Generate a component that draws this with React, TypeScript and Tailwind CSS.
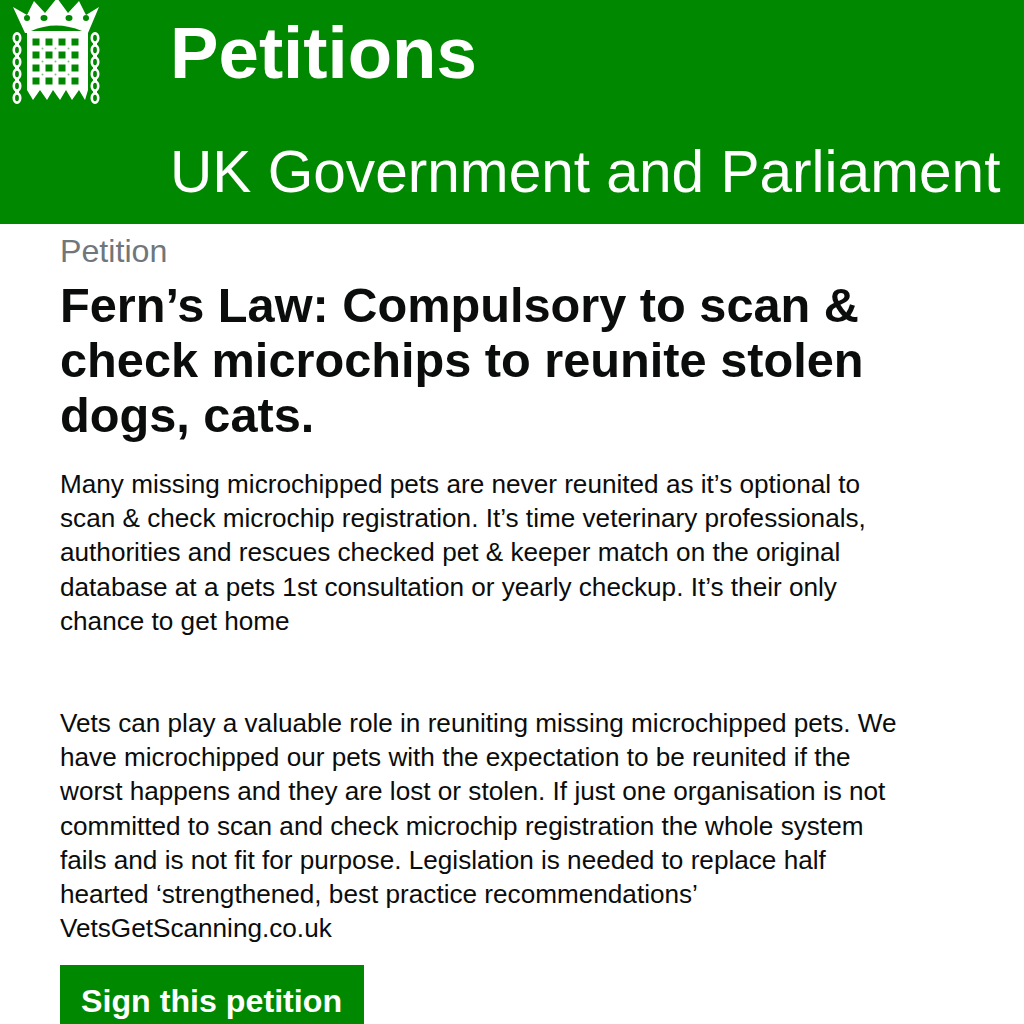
import React from "react";

function Logo() {
  const G = "#008800";
  const squares: React.ReactElement[] = [];
  const dots: React.ReactElement[] = [];
  const xs = [36, 49, 62, 75];
  const ys = [42, 55, 68, 81];
  ys.forEach((y, r) =>
    xs.forEach((x, c) => {
      squares.push(<rect key={`s${r}-${c}`} x={x - 3.5} y={y - 3.5} width={7} height={7} fill={G} />);
      if (c < 3 && r < 3) dots.push(<circle key={`d${r}-${c}`} cx={x + 6.5} cy={y + 6.5} r={1} fill="#7fc27f" />);
    })
  );
  const chain = (x: number) =>
    [38, 50, 62, 74, 86, 98].map((y, i) => (
      <g key={`${x}-${y}`}>
        <ellipse cx={x} cy={y} rx={3.2} ry={4.6} fill="none" stroke="#fff" strokeWidth={2.6} />
        {i < 5 && <rect x={x - 2} y={y + 4} width={4} height={4} fill="#fff" />}
      </g>
    ));
  return (
    <svg width="112" height="110" viewBox="0 0 112 110" className="shrink-0 block">
      <path d="M13 7 L27 15 L34 1 L45 13 L57 -2 L68 13 L79 1 L86 15 L99 7 L88 33 L25 33 Z" fill="#fff" />
      <ellipse cx={27} cy={18} rx={3} ry={3} fill={G} />
      <ellipse cx={44} cy={18} rx={3.5} ry={3} fill={G} />
      <ellipse cx={69} cy={18} rx={3.5} ry={3} fill={G} />
      <ellipse cx={86} cy={18} rx={3} ry={3} fill={G} />
      <path d="M31 31 Q56 20 82 31 Z" fill={G} />
      <path d="M27 33 H88 V90 L85 100 L79 90 L72 100 L66 90 L60 100 L53 90 L47 100 L40 90 L33 100 L27 90 Z" fill="#fff" />
      {squares}
      {dots}
      {chain(17)}
      {chain(95)}
    </svg>
  );
}

export default function App() {
  return (
    <div className="w-[1024px] h-[1024px] overflow-hidden bg-white font-['Liberation_Sans',Arial,sans-serif]">
      <header className="h-[224px] bg-[#008800] text-white flex">
        <Logo />
        <div className="pl-[58px]">
          <div className="text-[72.7px] font-bold leading-[80px] mt-[13px]">Petitions</div>
          <div className="text-[58.6px] leading-[64px] mt-[47px] whitespace-nowrap">UK Government and Parliament</div>
        </div>
      </header>
      <main className="px-[60px]">
        <div className="text-[32.2px] leading-[34px] text-[#6f777b] mt-[10px]">Petition</div>
        <h1 className="text-[48.7px] font-bold leading-[55px] text-[#0b0c0c] mt-[10px] w-[840px]">
          Fern’s Law: Compulsory to scan &amp; check microchips to reunite stolen dogs, cats.
        </h1>
        <p className="text-[26.15px] leading-[34.2px] text-[#0b0c0c] mt-[24px] w-[840px]">
          Many missing microchipped pets are never reunited as it’s optional to scan &amp; check microchip registration. It’s time veterinary professionals, authorities and rescues checked pet &amp; keeper match on the original database at a pets 1st consultation or yearly checkup. It’s their only chance to get home
        </p>
        <p className="text-[26.15px] leading-[34.2px] text-[#0b0c0c] mt-[68px] w-[840px]">
          Vets can play a valuable role in reuniting missing microchipped pets. We have microchipped our pets with the expectation to be reunited if the worst happens and they are lost or stolen. If just one organisation is not committed to scan and check microchip registration the whole system fails and is not fit for purpose. Legislation is needed to replace half hearted ‘strengthened, best practice recommendations’ VetsGetScanning.co.uk
        </p>
        <div className="mt-[20px] inline-block bg-[#008800] text-white text-[32.2px] font-bold leading-[72px] h-[72px] pl-[21px] pr-[22px]">Sign this petition</div>
      </main>
    </div>
  );
}
